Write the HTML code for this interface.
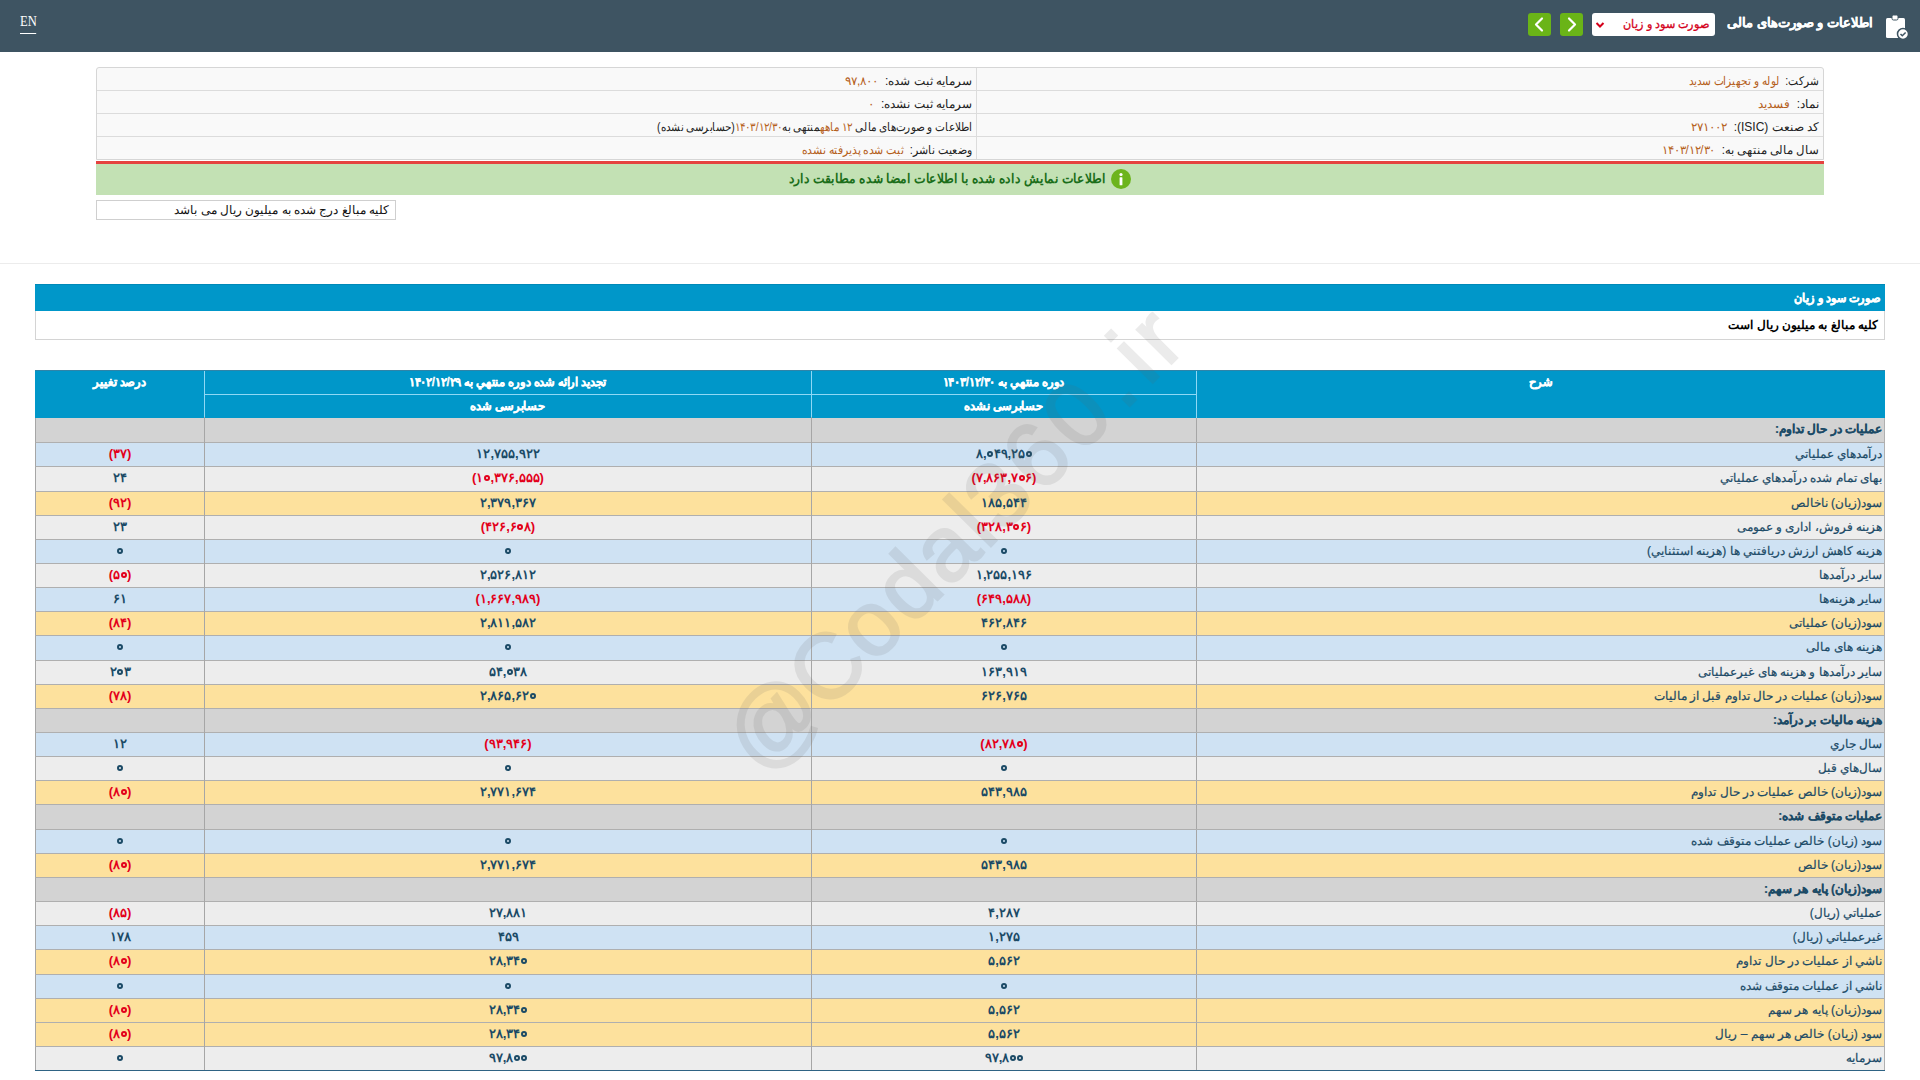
<!DOCTYPE html>
<html lang="fa">
<head>
<meta charset="utf-8">
<title>صورت سود و زیان</title>
<style>
*{box-sizing:border-box}
html,body{margin:0;padding:0}
body{width:1920px;height:1080px;overflow:hidden;position:relative;background:#fff;font-family:"Liberation Sans",sans-serif;color:#000}
.abs{position:absolute}
#hdr{position:absolute;left:0;top:0;width:1920px;height:52px;background:#3e5462}
#en{position:absolute;left:20px;top:14px;font-family:"Liberation Serif",serif;font-size:14px;color:#fff;line-height:16px;transform:scaleX(0.9);transform-origin:0 50%}
#en:after{content:"";position:absolute;left:0;width:17.8px;top:19px;height:1px;background:#fff}
#title{position:absolute;right:47px;top:13px;color:#fff;font-weight:bold;font-size:13.2px;-webkit-text-stroke:0.3px #fff;line-height:20px;direction:rtl;white-space:nowrap}
#sel{position:absolute;left:1592px;top:13px;width:123px;height:23px;background:#fff;border-radius:3px}
#sel span{position:absolute;right:6px;top:2px;color:#d4001a;font-size:12px;line-height:18px;direction:rtl;white-space:nowrap;-webkit-text-stroke:0.3px #d4001a;transform:scaleX(0.935);transform-origin:100% 50%}
#sel svg{position:absolute;left:3px;top:8px}
.gbtn{position:absolute;top:13px;width:23px;height:23px;background:#6ab417;border-radius:3px}
.gbtn svg{position:absolute;left:0;top:0}
#info{position:absolute;left:96px;top:67px;width:1728px;height:93px;background:#f9f9f9;border:1px solid #d6d6d6;border-radius:3px 3px 0 0}
.irow{position:absolute;left:0;width:1726px;height:23px;border-top:1px solid #dcdcdc}
.icell{position:absolute;top:0;margin-top:1px;height:22px;line-height:22px;font-size:12px;direction:rtl;white-space:nowrap;transform-origin:100% 50%}
.lbl{color:#222}
.val{color:#b5601b}
#redl{position:absolute;left:96px;top:161px;width:1728px;height:3px;background:#e5423f}
#green{position:absolute;left:96px;top:164px;width:1728px;height:31px;background:#c3e1b4}
#green .t{position:absolute;right:718px;top:6px;color:#1b6e1a;font-weight:bold;font-size:13px;transform:scaleX(0.942);transform-origin:100% 50%;line-height:18px;direction:rtl;white-space:nowrap}
#green .ic{position:absolute;left:1015px;top:5px;width:20px;height:20px;border-radius:50%;background:#6cb41c}
#smallbox{position:absolute;left:96px;top:200px;width:300px;height:20px;border:1px solid #cfcfcf;background:#fff}
#smallbox span{position:absolute;right:6px;top:1px;font-size:12px;line-height:16px;direction:rtl;white-space:nowrap;color:#111}
#hline{position:absolute;left:0;top:263px;width:1920px;height:1px;background:#ececec}
#bluebar{position:absolute;left:35px;top:284px;width:1850px;height:27px;background:#0097c9;border-top:1px solid #0089b8}
#bluebar span{position:absolute;right:5px;top:4px;color:#fff;font-weight:bold;font-size:12px;line-height:18px;direction:rtl;white-space:nowrap;-webkit-text-stroke:0.4px #fff;transform:scaleX(0.935);transform-origin:100% 50%}
#unitbox{position:absolute;left:35px;top:311px;width:1850px;height:29px;border:1px solid #d4d4d4;border-top:none;background:#fff}
#unitbox span{position:absolute;right:6px;top:5px;font-weight:bold;font-size:12px;line-height:18px;direction:rtl;white-space:nowrap;color:#000}
#thead{position:absolute;left:35px;top:370px;width:1850px;height:48px;background:#0097c9;border-top:1px solid #2f84a8}
.th{position:absolute;color:#fff;font-weight:bold;font-size:12px;transform:scaleX(0.96);-webkit-text-stroke:0.3px #fff;line-height:16px;text-align:center;direction:rtl;white-space:nowrap}
.vl{position:absolute;top:0;width:1px;background:#8fd8f5}
.r{position:absolute;left:35px;width:1850px;border-bottom:1px solid #afafaf;border-left:1px solid #a6a6a6;border-right:1px solid #b0b0b0}
.r.s{background:#d3d3d3}
.r.b{background:#cfe2f3}
.r.g{background:#ededed}
.r.y{background:#fde19d}
.r>div{position:absolute;top:0;bottom:0;line-height:23px;font-size:13px;direction:rtl;white-space:nowrap;color:#1b4a66}
.c1,.c2,.c3{margin-top:-1px}
.c1{left:0;width:168px;text-align:center;direction:ltr!important;font-weight:bold}
.c2{left:168px;width:607px;text-align:center;direction:ltr!important;font-weight:bold;border-left:1px solid #a6a6a6}
.c3{left:775px;width:385px;text-align:center;direction:ltr!important;font-weight:bold;border-left:1px solid #a6a6a6}
.c4{left:1160px;width:688px;text-align:right;padding-right:2px;border-left:1px solid #a6a6a6;font-size:12px!important}
.r.s .c4{font-weight:bold}
.r .c4{-webkit-text-stroke:0.2px currentColor}
.neg{color:#e3001b}
.z{display:inline-block;width:6px;height:6px;border:2px solid currentColor;border-radius:50%;margin:0 0.5px;vertical-align:1px}
#tbot{position:absolute;left:35px;top:1070px;width:1850px;height:1px;background:#2f6384}
#wm{position:absolute;left:0;top:0;width:1920px;height:1080px;pointer-events:none}
</style>
</head>
<body>
<div id="hdr">
  <div id="en">EN</div>
  <div class="gbtn" style="left:1528px"><svg width="23" height="23" viewBox="0 0 23 23"><path d="M14 5.5 L8 11.5 L14 17.5" stroke="#fff" stroke-width="2.2" fill="none" stroke-linecap="round" stroke-linejoin="round"/></svg></div>
  <div class="gbtn" style="left:1560px"><svg width="23" height="23" viewBox="0 0 23 23"><path d="M9 5.5 L15 11.5 L9 17.5" stroke="#fff" stroke-width="2.2" fill="none" stroke-linecap="round" stroke-linejoin="round"/></svg></div>
  <div id="sel"><svg width="10" height="8" viewBox="0 0 10 8"><path d="M1.5 2 L5 5.5 L8.5 2" stroke="#d4001a" stroke-width="2" fill="none"/></svg><span>صورت سود و زیان</span></div>
  <div id="title">اطلاعات و صورت‌های مالی</div>
  <svg class="abs" style="left:1885px;top:14px" width="24" height="26" viewBox="0 0 24 26">
    <rect x="1" y="4" width="19" height="20" rx="1.5" fill="#fff"/>
    <rect x="7" y="1" width="6" height="5" rx="1.5" fill="#fff" stroke="#3e5462" stroke-width="1"/>
    <circle cx="18" cy="20" r="5.5" fill="#fff" stroke="#3e5462" stroke-width="1.5"/>
    <path d="M15.5 20 L17.3 21.8 L20.6 18.5" stroke="#3e5462" stroke-width="1.5" fill="none"/>
  </svg>
</div>

<div id="info">
  <div class="irow" style="top:0;border-top:none"></div>
  <div class="irow" style="top:22px"></div>
  <div class="irow" style="top:45px"></div>
  <div class="irow" style="top:68px"></div>
  <div class="abs" style="left:879px;top:0;width:1px;height:91px;background:#dcdcdc"></div>
  <!-- right column -->
  <div class="icell" style="right:4px;top:1px;transform:scaleX(0.88)"><span class="lbl">شرکت:</span>&nbsp; <span class="val">لوله و تجهیزات سدید</span></div>
  <div class="icell" style="right:4px;top:24px"><span class="lbl">نماد:</span>&nbsp; <span class="val">فسدید</span></div>
  <div class="icell" style="right:4px;top:47px"><span class="lbl">کد صنعت (ISIC):</span>&nbsp; <span class="val">۲۷۱۰۰۲</span></div>
  <div class="icell" style="right:4px;top:70px;transform:scaleX(0.975)"><span class="lbl">سال مالی منتهی به:</span>&nbsp; <span class="val">۱۴۰۳/۱۲/۳۰</span></div>
  <!-- left column -->
  <div class="icell" style="right:851px;top:1px"><span class="lbl">سرمایه ثبت شده:</span>&nbsp; <span class="val">۹۷,۸۰۰</span></div>
  <div class="icell" style="right:851px;top:24px"><span class="lbl">سرمایه ثبت نشده:</span>&nbsp; <span class="val">۰</span></div>
  <div class="icell" style="right:851px;top:47px;transform:scaleX(0.87)"><span class="lbl">اطلاعات و صورت‌های مالی <span class="val">۱۲ ماهه</span>منتهی به<span class="val">۱۴۰۳/۱۲/۳۰</span>(حسابرسی نشده)</span></div>
  <div class="icell" style="right:851px;top:70px;transform:scaleX(0.91)"><span class="lbl">وضعیت ناشر:</span>&nbsp; <span class="val">ثبت شده پذیرفته نشده</span></div>
</div>
<div id="redl"></div>
<div id="green"><div class="t">اطلاعات نمایش داده شده با اطلاعات امضا شده مطابقت دارد</div><div class="ic"><svg width="20" height="20" viewBox="0 0 20 20"><circle cx="10" cy="5.5" r="1.6" fill="#fff"/><rect x="8.6" y="8.2" width="2.8" height="8" rx="0.5" fill="#fff"/></svg></div></div>
<div id="smallbox"><span>کلیه مبالغ درج شده به میلیون ریال می باشد</span></div>
<div id="hline"></div>

<div id="bluebar"><span>صورت سود و زیان</span></div>
<div id="unitbox"><span>کلیه مبالغ به میلیون ریال است</span></div>

<div id="thead">
  <div class="vl" style="left:169px;height:48px"></div>
  <div class="vl" style="left:776px;height:48px"></div>
  <div class="vl" style="left:1161px;height:48px"></div>
  <div class="abs" style="left:169px;top:23px;width:992px;height:1px;background:#8fd8f5"></div>
  <div class="th" style="left:0;width:169px;top:3px">درصد تغییر</div>
  <div class="th" style="left:169px;width:607px;top:3px">تجدید ارائه شده دوره منتهي به ۱۴۰۲/۱۲/۲۹</div>
  <div class="th" style="left:169px;width:607px;top:27px">حسابرسی شده</div>
  <div class="th" style="left:776px;width:385px;top:3px">دوره منتهي به ۱۴۰۳/۱۲/۳۰</div>
  <div class="th" style="left:776px;width:385px;top:27px">حسابرسی نشده</div>
  <div class="th" style="left:1161px;width:689px;top:3px">شرح</div>
</div>

<div class="r s" style="top:418px;height:25px"><div class="c4">عملیات در حال تداوم:</div><div class="c3"></div><div class="c2"></div><div class="c1"></div></div>
<div class="r b" style="top:443px;height:24px"><div class="c4">درآمدهاي عملياتي</div><div class="c3">۸,<i class="z"></i>۴۹,۲۵<i class="z"></i></div><div class="c2">۱۲,۷۵۵,۹۲۲</div><div class="c1"><span class="neg">(۳۷)</span></div></div>
<div class="r g" style="top:467px;height:25px"><div class="c4">بهای تمام شده درآمدهاي عملياتي</div><div class="c3"><span class="neg">(۷,۸۶۳,۷<i class="z"></i>۶)</span></div><div class="c2"><span class="neg">(۱<i class="z"></i>,۳۷۶,۵۵۵)</span></div><div class="c1">۲۴</div></div>
<div class="r y" style="top:492px;height:24px"><div class="c4">سود(زیان) ناخالص</div><div class="c3">۱۸۵,۵۴۴</div><div class="c2">۲,۳۷۹,۳۶۷</div><div class="c1"><span class="neg">(۹۲)</span></div></div>
<div class="r g" style="top:516px;height:24px"><div class="c4">هزینه فروش، اداری و عمومی</div><div class="c3"><span class="neg">(۳۲۸,۳<i class="z"></i>۶)</span></div><div class="c2"><span class="neg">(۴۲۶,۶<i class="z"></i>۸)</span></div><div class="c1">۲۳</div></div>
<div class="r b" style="top:540px;height:24px"><div class="c4">هزینه کاهش ارزش دریافتني ها (هزینه استثنايي)</div><div class="c3"><i class="z"></i></div><div class="c2"><i class="z"></i></div><div class="c1"><i class="z"></i></div></div>
<div class="r g" style="top:564px;height:24px"><div class="c4">سایر درآمدها</div><div class="c3">۱,۲۵۵,۱۹۶</div><div class="c2">۲,۵۲۶,۸۱۲</div><div class="c1"><span class="neg">(۵<i class="z"></i>)</span></div></div>
<div class="r b" style="top:588px;height:24px"><div class="c4">سایر هزینه‌ها</div><div class="c3"><span class="neg">(۶۴۹,۵۸۸)</span></div><div class="c2"><span class="neg">(۱,۶۶۷,۹۸۹)</span></div><div class="c1">۶۱</div></div>
<div class="r y" style="top:612px;height:24px"><div class="c4">سود(زیان) عملیاتی</div><div class="c3">۴۶۲,۸۴۶</div><div class="c2">۲,۸۱۱,۵۸۲</div><div class="c1"><span class="neg">(۸۴)</span></div></div>
<div class="r b" style="top:636px;height:25px"><div class="c4">هزینه های مالی</div><div class="c3"><i class="z"></i></div><div class="c2"><i class="z"></i></div><div class="c1"><i class="z"></i></div></div>
<div class="r g" style="top:661px;height:24px"><div class="c4">سایر درآمدها و هزینه های غیرعملیاتی</div><div class="c3">۱۶۳,۹۱۹</div><div class="c2">۵۴,<i class="z"></i>۳۸</div><div class="c1">۲<i class="z"></i>۳</div></div>
<div class="r y" style="top:685px;height:24px"><div class="c4">سود(زیان) عملیات در حال تداوم قبل از مالیات</div><div class="c3">۶۲۶,۷۶۵</div><div class="c2">۲,۸۶۵,۶۲<i class="z"></i></div><div class="c1"><span class="neg">(۷۸)</span></div></div>
<div class="r s" style="top:709px;height:24px"><div class="c4">هزینه مالیات بر درآمد:</div><div class="c3"></div><div class="c2"></div><div class="c1"></div></div>
<div class="r b" style="top:733px;height:24px"><div class="c4">سال جاري</div><div class="c3"><span class="neg">(۸۲,۷۸<i class="z"></i>)</span></div><div class="c2"><span class="neg">(۹۳,۹۴۶)</span></div><div class="c1">۱۲</div></div>
<div class="r g" style="top:757px;height:24px"><div class="c4">سال‌هاي قبل</div><div class="c3"><i class="z"></i></div><div class="c2"><i class="z"></i></div><div class="c1"><i class="z"></i></div></div>
<div class="r y" style="top:781px;height:24px"><div class="c4">سود(زیان) خالص عملیات در حال تداوم</div><div class="c3">۵۴۳,۹۸۵</div><div class="c2">۲,۷۷۱,۶۷۴</div><div class="c1"><span class="neg">(۸<i class="z"></i>)</span></div></div>
<div class="r s" style="top:805px;height:25px"><div class="c4">عملیات متوقف شده:</div><div class="c3"></div><div class="c2"></div><div class="c1"></div></div>
<div class="r b" style="top:830px;height:24px"><div class="c4">سود (زیان) خالص عملیات متوقف شده</div><div class="c3"><i class="z"></i></div><div class="c2"><i class="z"></i></div><div class="c1"><i class="z"></i></div></div>
<div class="r y" style="top:854px;height:24px"><div class="c4">سود(زیان) خالص</div><div class="c3">۵۴۳,۹۸۵</div><div class="c2">۲,۷۷۱,۶۷۴</div><div class="c1"><span class="neg">(۸<i class="z"></i>)</span></div></div>
<div class="r s" style="top:878px;height:24px"><div class="c4">سود(زیان) پایه هر سهم:</div><div class="c3"></div><div class="c2"></div><div class="c1"></div></div>
<div class="r g" style="top:902px;height:24px"><div class="c4">عملیاتي (ریال)</div><div class="c3">۴,۲۸۷</div><div class="c2">۲۷,۸۸۱</div><div class="c1"><span class="neg">(۸۵)</span></div></div>
<div class="r b" style="top:926px;height:24px"><div class="c4">غیرعملیاتي (ریال)</div><div class="c3">۱,۲۷۵</div><div class="c2">۴۵۹</div><div class="c1">۱۷۸</div></div>
<div class="r y" style="top:950px;height:25px"><div class="c4">ناشي از عملیات در حال تداوم</div><div class="c3">۵,۵۶۲</div><div class="c2">۲۸,۳۴<i class="z"></i></div><div class="c1"><span class="neg">(۸<i class="z"></i>)</span></div></div>
<div class="r b" style="top:975px;height:24px"><div class="c4">ناشي از عملیات متوقف شده</div><div class="c3"><i class="z"></i></div><div class="c2"><i class="z"></i></div><div class="c1"><i class="z"></i></div></div>
<div class="r y" style="top:999px;height:24px"><div class="c4">سود(زیان) پایه هر سهم</div><div class="c3">۵,۵۶۲</div><div class="c2">۲۸,۳۴<i class="z"></i></div><div class="c1"><span class="neg">(۸<i class="z"></i>)</span></div></div>
<div class="r y" style="top:1023px;height:24px"><div class="c4">سود (زیان) خالص هر سهم – ریال</div><div class="c3">۵,۵۶۲</div><div class="c2">۲۸,۳۴<i class="z"></i></div><div class="c1"><span class="neg">(۸<i class="z"></i>)</span></div></div>
<div class="r g" style="top:1047px;height:24px"><div class="c4">سرمایه</div><div class="c3">۹۷,۸<i class="z"></i><i class="z"></i></div><div class="c2">۹۷,۸<i class="z"></i><i class="z"></i></div><div class="c1"><i class="z"></i></div></div>
<div id="tbot"></div>

<svg id="wm" width="1920" height="1080" viewBox="0 0 1920 1080">
  <g opacity="0.12"><text x="0 90.2 157.4 211.4 264.4 318.3 340.6 395.5 452.5 513.5 548.8 575.1" y="0" transform="translate(762.5,777) rotate(-45.3)" font-family="Liberation Sans" font-size="92" fill="#606060" stroke="#606060" stroke-width="2.2">@Codal360.ir</text></g>
</svg>
</body>
</html>
